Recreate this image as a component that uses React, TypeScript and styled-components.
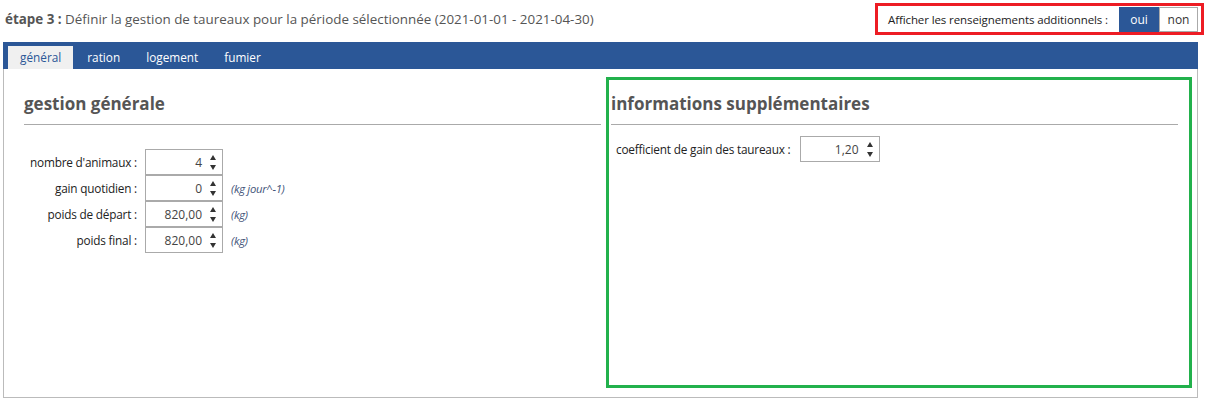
import React, { useState } from 'react'
import styled, { createGlobalStyle } from 'styled-components'

const GlobalStyle = createGlobalStyle`
	html, body {
		margin: 0;
		padding: 0;
		background: #ffffff;
	}
	body {
		font-family: 'Open Sans', 'Noto Sans', sans-serif;
		color: #333;
	}
	* {
		box-sizing: border-box;
	}
`

const tabs = ['général', 'ration', 'logement', 'fumier']

const generalRows = [
	{ label: "nombre d'animaux :", value: '4', unit: '' },
	{ label: 'gain quotidien :', value: '0', unit: '(kg jour^-1)' },
	{ label: 'poids de départ :', value: '820,00', unit: '(kg)' },
	{ label: 'poids final :', value: '820,00', unit: '(kg)' },
]

const Spinner = ({ value, width }: { value: string; width: number }) => (
	<SpinBox $width={width}>
		<SpinValue>{value}</SpinValue>
		<SpinArrows>
			<Arrow $up />
			<Arrow />
		</SpinArrows>
	</SpinBox>
)

const App = () => {
	const [activeTab, setActiveTab] = useState(0)
	const [showExtra, setShowExtra] = useState(true)

	return (
		<Page>
			<GlobalStyle />
			<Header>
				<Title>
					<strong>étape 3 :</strong> Définir la gestion de taureaux pour la
					période sélectionnée (2021-01-01 - 2021-04-30)
				</Title>
				<ToggleBox>
					<ToggleLabel>Afficher les renseignements additionnels :</ToggleLabel>
					<ToggleButton $active={showExtra} onClick={() => setShowExtra(true)}>
						oui
					</ToggleButton>
					<ToggleButton
						$active={!showExtra}
						onClick={() => setShowExtra(false)}>
						non
					</ToggleButton>
				</ToggleBox>
			</Header>

			<TabBar>
				{tabs.map((tab, i) => (
					<Tab key={tab} $active={i === activeTab} onClick={() => setActiveTab(i)}>
						{tab}
					</Tab>
				))}
			</TabBar>

			<Panel>
				<LeftColumn>
					<SectionTitle>gestion générale</SectionTitle>
					<Rule />
					<FormGrid>
						{generalRows.map((row) => (
							<React.Fragment key={row.label}>
								<FieldLabel>{row.label}</FieldLabel>
								<Spinner value={row.value} width={78} />
								<Unit>{row.unit}</Unit>
							</React.Fragment>
						))}
					</FormGrid>
				</LeftColumn>

				<ExtraColumn>
					<SectionTitle>informations supplémentaires</SectionTitle>
					<Rule />
					<InlineRow>
						<FieldLabel>coefficient de gain des taureaux :</FieldLabel>
						<Spinner value="1,20" width={80} />
					</InlineRow>
				</ExtraColumn>
			</Panel>
		</Page>
	)
}

export default App

const Page = styled.div`
	width: 1206px;
	height: 401px;
	overflow: hidden;
`

const Header = styled.div`
	display: flex;
	align-items: center;
	justify-content: space-between;
	height: 35px;
	padding: 3px 2px 0 5px;
	margin-bottom: 7px;
`

const Title = styled.div`
	font-size: 13.4px;
	color: #555;

	strong {
		font-weight: 700;
		color: #555;
	}
`

const ToggleBox = styled.div`
	display: flex;
	align-items: center;
	height: 32px;
	border: 3px solid #ed1c24;
	padding: 0 3px 0 10px;
`

const ToggleLabel = styled.span`
	font-size: 11.5px;
	color: #222;
	margin-right: 11px;
	letter-spacing: -0.1px;
`

const ToggleButton = styled.button<{ $active: boolean }>`
	height: 25px;
	width: ${(p) => (p.$active ? '40px' : '39px')};
	font-family: inherit;
	font-size: 12px;
	padding: 0;
	cursor: pointer;
	border: 1px solid ${(p) => (p.$active ? '#2b5797' : '#aaa')};
	background: ${(p) => (p.$active ? '#2b5797' : '#fff')};
	color: ${(p) => (p.$active ? '#fff' : '#333')};
`

const TabBar = styled.div`
	display: flex;
	align-items: flex-end;
	height: 27px;
	margin: 0 8px 0 3px;
	padding-left: 5px;
	background: #2b5797;
`

const Tab = styled.div<{ $active: boolean }>`
	height: 23px;
	line-height: 23px;
	padding: 0 12px;
	margin-right: 2px;
	font-size: 11.8px;
	cursor: pointer;
	background: ${(p) => (p.$active ? '#f0f0f0' : 'transparent')};
	color: ${(p) => (p.$active ? '#2b5797' : '#fff')};
`

const Panel = styled.div`
	display: flex;
	margin: 0 8px 0 3px;
	height: 329px;
	border: 1px solid #bbb;
	border-top: none;
`

const LeftColumn = styled.div`
	width: 597px;
	padding: 23px 0 0 20px;
`

const ExtraColumn = styled.div`
	width: 586px;
	height: 311px;
	margin: 8px 0 0 5px;
	border: 3px solid #22b14c;
	padding: 12px 11px 0 2px;
`

const SectionTitle = styled.h2`
	margin: 0;
	height: 24px;
	line-height: 24px;
	font-size: 17px;
	font-weight: 700;
	color: #555;
`

const Rule = styled.div`
	height: 1px;
	margin-top: 8px;
	background: #aaa;
`

const FormGrid = styled.div`
	display: grid;
	grid-template-columns: 113px 78px auto;
	column-gap: 8px;
	margin-top: 24px;
	align-items: center;
`

const InlineRow = styled.div`
	display: flex;
	align-items: center;
	gap: 9px;
	margin-top: 11px;
	padding-left: 5px;
`

const FieldLabel = styled.span`
	font-size: 11.8px;
	color: #222;
	text-align: right;
	white-space: nowrap;
	letter-spacing: -0.2px;
`

const Unit = styled.span`
	font-size: 11.3px;
	font-style: italic;
	color: #44547a;
	letter-spacing: -0.3px;
`

const SpinBox = styled.div<{ $width: number }>`
	display: flex;
	align-items: center;
	width: ${(p) => p.$width}px;
	height: 26px;
	border: 1px solid #aaa;
	background: #fff;
`

const SpinValue = styled.span`
	flex: 1;
	text-align: right;
	font-size: 12px;
	color: #444;
	padding-right: 6px;
`

const SpinArrows = styled.div`
	display: flex;
	flex-direction: column;
	justify-content: space-between;
	align-items: center;
	height: 15px;
	width: 10px;
	margin-right: 4px;
`

const Arrow = styled.span<{ $up?: boolean }>`
	width: 0;
	height: 0;
	border-left: 3px solid transparent;
	border-right: 3px solid transparent;
	${(p) =>
		p.$up ? 'border-bottom: 5px solid #333;' : 'border-top: 5px solid #333;'}
`
